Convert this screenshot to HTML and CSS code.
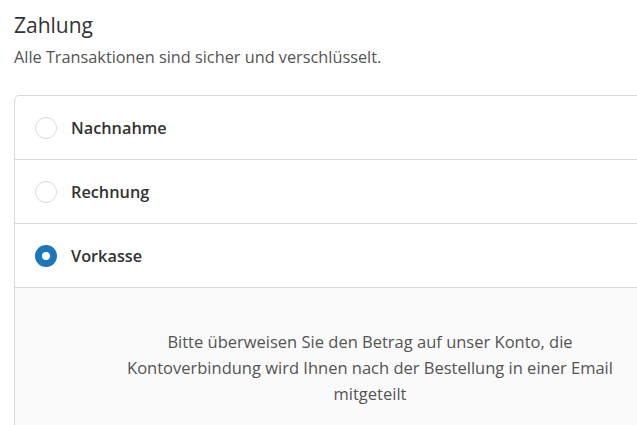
FILE: index.html
```html
<!DOCTYPE html>
<html lang="de">
<head>
<meta charset="utf-8">
<title>Zahlung</title>
<link rel="stylesheet" href="styles.css">
</head>
<body>
<div class="page">
  <section class="section">
    <h2 class="title">Zahlung</h2>
    <p class="subtitle">Alle Transaktionen sind sicher und verschlüsselt.</p>
    <div class="box">
      <label class="row">
        <span class="radio"></span>
        <span class="label">Nachnahme</span>
      </label>
      <label class="row">
        <span class="radio"></span>
        <span class="label">Rechnung</span>
      </label>
      <label class="row">
        <span class="radio radio-checked"></span>
        <span class="label">Vorkasse</span>
      </label>
      <div class="info">
        <p class="info-text">Bitte überweisen Sie den Betrag auf unser Konto, die Kontoverbindung wird Ihnen nach der Bestellung in einer Email mitgeteilt</p>
      </div>
    </div>
  </section>
</div>
</body>
</html>
```
FILE: styles.css
```css
html, body {
  margin: 0;
  padding: 0;
  background: #fff;
  overflow: hidden;
}
.page {
  width: 637px;
  height: 425px;
  overflow: hidden;
  font-family: "Open Sans", "Noto Sans", sans-serif;
  color: #333;
}
.section {
  padding: 10px 0 0 14px;
}
.title {
  margin: 0;
  font-size: 21px;
  font-weight: 400;
  line-height: 30px;
  color: #333;
}
.subtitle {
  margin: 5px 0 0;
  font-size: 16.3px;
  line-height: 24px;
  color: #545454;
}
.box {
  margin-top: 26px;
  width: 710px;
  border: 1px solid #d9d9d9;
  border-radius: 5px;
  background: #fff;
}
.row {
  display: flex;
  align-items: center;
  gap: 14px;
  height: 63px;
  padding-left: 20px;
  border-bottom: 1px solid #d9d9d9;
}
.radio {
  box-sizing: border-box;
  width: 22px;
  height: 22px;
  border-radius: 50%;
  border: 1px solid #d9d9d9;
  background: #fff;
  flex: none;
}
.radio-checked {
  border: 7px solid #1878b9;
}
.label {
  font-size: 16.3px;
  font-weight: 600;
  color: #333;
}
.info {
  background: #fafafa;
  padding: 41px 40px 40px;
  height: 200px;
}
.info-text {
  margin: 0 auto;
  max-width: 500px;
  text-align: center;
  font-size: 16.5px;
  line-height: 26px;
  color: #545454;
}
```
